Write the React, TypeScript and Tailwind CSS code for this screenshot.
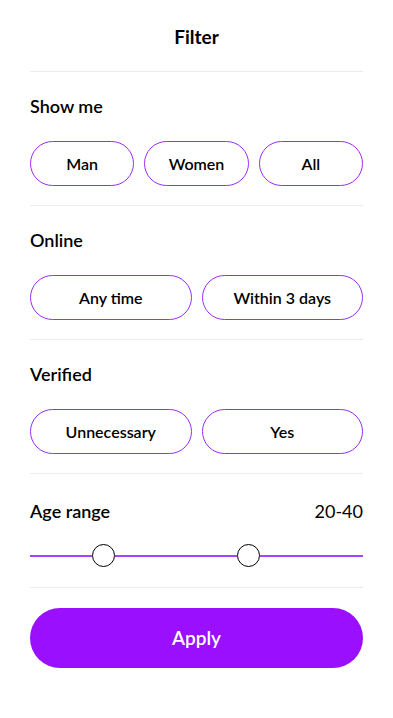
import React from 'react';

function Pill({ label }: { label: string }) {
  return (
    <button className="h-[45px] rounded-full border border-[#9b2cf7] bg-white text-[16px] font-semibold text-black">
      {label}
    </button>
  );
}

function Section({ title, options }: { title: string; options: string[] }) {
  return (
    <div className="border-t border-[#ececec] pt-[22px] pb-[19px]">
      <h2 className="text-[18px] leading-6 font-semibold text-black">{title}</h2>
      <div
        className={
          options.length === 3
            ? 'mt-[23px] grid grid-cols-3 gap-[10px]'
            : 'mt-[23px] grid grid-cols-2 gap-[10px]'
        }
      >
        {options.map((o) => (
          <Pill key={o} label={o} />
        ))}
      </div>
    </div>
  );
}

function Thumb() {
  return <div className="h-[23px] w-[23px] shrink-0 rounded-full border border-black bg-white" />;
}

export default function App() {
  return (
    <div className="min-h-[718px] bg-white px-[30px] font-['Lato',sans-serif] text-black">
      <div className="flex h-[71px] items-center justify-center pt-[3px]">
        <h1 className="text-[19px] font-bold">Filter</h1>
      </div>

      <Section title="Show me" options={['Man', 'Women', 'All']} />
      <Section title="Online" options={['Any time', 'Within 3 days']} />
      <Section title="Verified" options={['Unnecessary', 'Yes']} />

      <div className="border-t border-[#ececec] pt-[25px] pb-[20px]">
        <div className="flex items-center justify-between">
          <h2 className="text-[18px] leading-6 font-semibold">Age range</h2>
          <span className="text-[18px] leading-6">20-40</span>
        </div>
        <div className="mt-[21px] flex h-[23px] items-center">
          <div className="h-[2px] w-[62px] bg-[#a544ff]" />
          <Thumb />
          <div className="h-[2px] w-[122px] bg-[#a544ff]" />
          <Thumb />
          <div className="h-[2px] flex-1 bg-[#a544ff]" />
        </div>
      </div>

      <div className="border-t border-[#ececec] pt-[20px]">
        <button className="h-[60px] w-full rounded-full bg-[#9a10fe] text-[19px] font-semibold text-white">
          Apply
        </button>
      </div>
    </div>
  );
}
